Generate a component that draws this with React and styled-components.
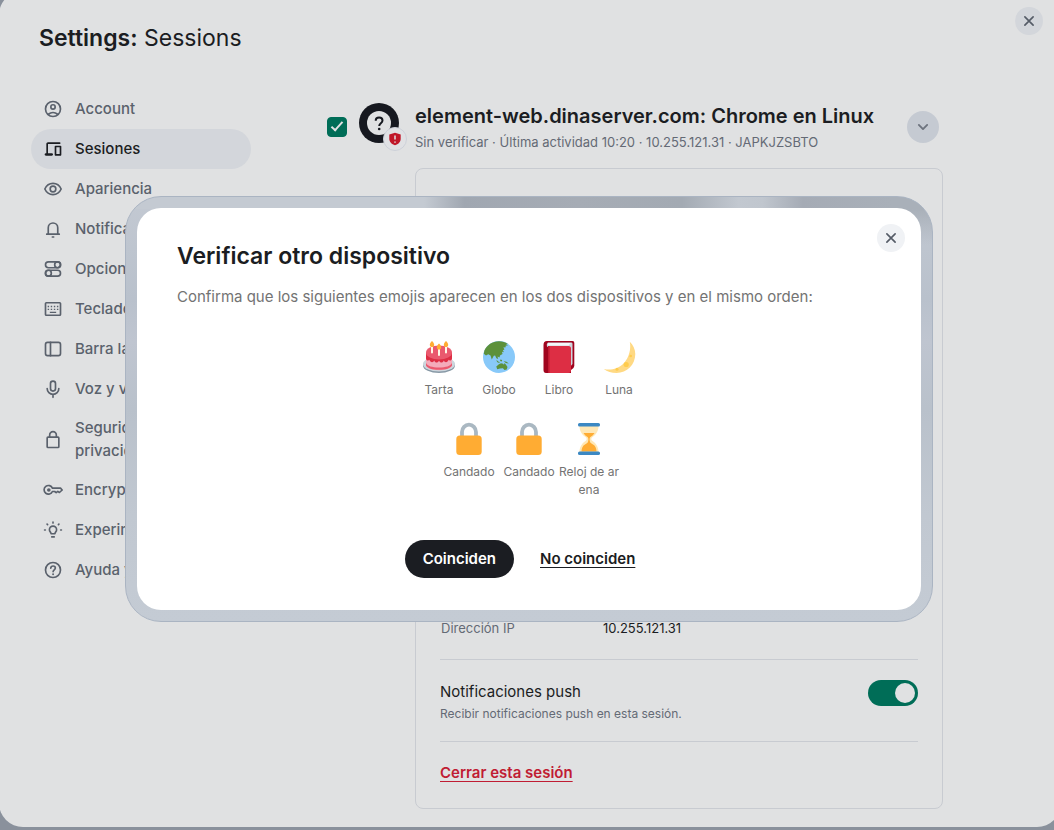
import React, { useState } from "react";
import styled, { createGlobalStyle, css } from "styled-components";

const GlobalStyle = createGlobalStyle`
  *, *::before, *::after {
    box-sizing: border-box;
  }

  body {
    margin: 0;
    background: #8a919c;
    color: #1b1d22;
    font-family: Inter, "Liberation Sans", sans-serif;
    overflow-x: hidden;
  }

  h1, h2, h3, p, ul {
    margin: 0;
    padding: 0;
  }

  button {
    font-family: inherit;
    cursor: pointer;
  }
`;

/* ---------- icons ---------- */

const Stroke = ({ children, width = 2 }) => (
  <svg
    viewBox="0 0 24 24"
    fill="none"
    stroke="currentColor"
    strokeWidth={width}
    strokeLinejoin="round"
    strokeLinecap="round"
    aria-hidden="true"
  >
    {children}
  </svg>
);

const AccountIcon = () => (
  <Stroke>
    <circle cx="12" cy="12" r="9" />
    <circle cx="12" cy="9.5" r="2.6" />
    <path d="M6.5 18.3C8 17 9.900 16.200 12 16.200s4 .8 5.500 2.100" />
  </Stroke>
);

const DevicesIcon = () => (
  <svg viewBox="0 0 24 24" fill="currentColor" aria-hidden="true">
    <path d="M3.500 20a1.450 1.450 0 0 1-1.066-.434A1.450 1.450 0 0 1 2 18.500q0-.624.434-1.062A1.450 1.450 0 0 1 3.500 17H4V6q0-.824.588-1.412A1.930 1.930 0 0 1 6 4h14q.424 0 .712.287Q21 4.576 21 5t-.288.713A.970.970 0 0 1 20 6H6v11h4.500q.624 0 1.063.438.437.437.437 1.062t-.437 1.066A1.450 1.450 0 0 1 10.500 20z" />
    <path
      fillRule="evenodd"
      d="M15 20a.970.970 0 0 1-.713-.288A.970.970 0 0 1 14 19V9q0-.424.287-.713A.970.970 0 0 1 15 8h6q.424 0 .712.287Q22 8.576 22 9v10q0 .424-.288.712A.970.970 0 0 1 21 20zm1-2h4v-8h-4z"
    />
  </svg>
);

const EyeIcon = () => (
  <Stroke>
    <path d="M2.200 12C4 8 7.600 5.300 12 5.300S20 8 21.800 12C20 16 16.400 18.700 12 18.700S4 16 2.200 12z" />
    <circle cx="12" cy="12" r="3.400" />
  </Stroke>
);

const BellIcon = () => (
  <Stroke>
    <path d="M6.300 18v-7.500a5.700 5.700 0 0 1 11.400 0V18M4.500 18.200h15" />
    <path d="M11.200 21.600h1.600" />
  </Stroke>
);

const PreferencesIcon = () => (
  <Stroke>
    <rect x="3" y="3.500" width="18" height="7" rx="3.500" />
    <circle cx="17.500" cy="7" r="3.500" />
    <rect x="3" y="13.500" width="18" height="7" rx="3.500" />
    <circle cx="6.500" cy="17" r="3.500" />
  </Stroke>
);

const KeyboardIcon = () => (
  <Stroke>
    <rect x="3" y="4.500" width="18" height="15" rx="1" />
    <path
      d="M6.400 9h.1M10.100 9h.1M13.800 9h.1M17.500 9h.1M6.400 12.500h.1M10.100 12.500h.1M13.800 12.500h.1M17.500 12.500h.1M9 16h6"
      strokeLinecap="square"
      strokeWidth="1.600"
    />
  </Stroke>
);

const SidebarIcon = () => (
  <Stroke>
    <rect x="3" y="4" width="18" height="16" rx="2.500" />
    <path d="M9 4v16" />
  </Stroke>
);

const MicIcon = () => (
  <Stroke>
    <rect x="9" y="2.500" width="6" height="12" rx="3" />
    <path d="M5 11.500a7 7 0 0 0 14 0M12 18.500V22" />
  </Stroke>
);

const LockIcon = () => (
  <Stroke>
    <rect x="5" y="8.500" width="14" height="12.500" rx="1" />
    <path d="M8 8.500V6a4 4 0 0 1 8 0v2.500" />
  </Stroke>
);

const KeyIcon = () => (
  <Stroke>
    <path d="M11.300 9.800H21l2 2.200-3.300 3-1.900-1.300-2 1.500-1.800-1.400h-2.700a5.200 5.200 0 1 1 0-4z" />
    <circle cx="7" cy="12" r="1.200" fill="currentColor" />
  </Stroke>
);

const LabsIcon = () => (
  <Stroke>
    <path d="M9.700 16.500c0-1.700-2-2.500-2-4.900a4.300 4.300 0 0 1 8.600 0c0 2.400-2 3.200-2 4.900zM10.500 20.300h3" />
    <path d="M12 2.600v.9M4.900 4.900l.6.600M19.100 4.900l-.6.600M1.900 12h.9M21.200 12h.9" />
  </Stroke>
);

const HelpIcon = () => (
  <Stroke>
    <circle cx="12" cy="12" r="9" />
    <path d="M9.300 9.700c.2-1.600 1.300-2.500 2.800-2.500 1.600 0 2.700 1 2.700 2.400 0 2.100-2.700 2.300-2.700 4.500" />
    <path d="M12.100 17.100v.1" strokeWidth="2.300" />
  </Stroke>
);

const CloseIcon = () => (
  <Stroke width="2.200">
    <path d="M6.500 6.500l11 11M17.500 6.500l-11 11" />
  </Stroke>
);

const ChevronIcon = () => (
  <Stroke width="2.200">
    <path d="M7 9.500l5 5 5-5" />
  </Stroke>
);

/* ---------- emoji drawings ---------- */

const Art = ({ children }) => (
  <svg viewBox="0 0 32 32" aria-hidden="true">
    {children}
  </svg>
);

const CakeArt = () => (
  <Art>
    <ellipse cx="16" cy="24.500" rx="16" ry="7.500" fill="#8899a6" />
    <ellipse cx="16" cy="23" rx="16" ry="7.500" fill="#ccd6dd" />
    <path d="M3 13v11c0 3 5.500 5.200 13 5.200S29 27 29 24V13z" fill="#f4abba" />
    <path d="M3 22c1.500 3 6 4.500 13 4.500s11.500-1.500 13-4.500v2.500c-1.500 2.800-6 4.300-13 4.300S4.500 27.300 3 24.500z" fill="#ea596e" />
    <path
      d="M3 12v5.500c.3 2.300 2.500 2.500 3.400 1.300.8 2.800 3.900 3.200 4.800.7.900 2.500 3.500 2.900 4.800.3 1.300 2.600 3.900 2.200 4.800-.3.900 2.500 4 2.100 4.800-.7.900 1.200 3.100 1 3.400-1.300V12z"
      fill="#dd2e44"
    />
    <ellipse cx="16" cy="11.500" rx="13" ry="7" fill="#ea596e" />
    <path d="M9 5v6.500M16 8v6M23 5v6.500" stroke="#fff8e8" strokeWidth="2" strokeLinecap="round" />
    <path
      d="M9 0c1.500 1.500 2.200 2.700 2.200 3.900S10.200 6 9 6 6.800 5.100 6.800 3.900 7.500 1.500 9 0zM16 2.600c1.500 1.500 2.200 2.700 2.200 3.900S17.200 8.600 16 8.600s-2.200-.9-2.200-2.100S14.500 4.100 16 2.600zM23 0c1.500 1.500 2.200 2.700 2.200 3.900S24.200 6 23 6s-2.200-.9-2.200-2.100S21.500 1.500 23 0z"
      fill="#ffac33"
    />
  </Art>
);

const GlobeArt = () => (
  <Art>
    <circle cx="16" cy="16" r="16" fill="#88c9f9" />
    <path
      d="M1.400 9.500C4 3.800 9.300.3 16 .2c3.500.1 6.500 1 8.800 2.500l-2 .3 2.300 1.200-2.600.6.300 1.500-2.500.2 1.200 1.800-1.700 1.200 1.300 1.700-2.100-.5.500 2.300-2.500 1.600-.5 1.900-2-.9.700 2.500-1.800-.8-1.300-2.700-1.300.2-2 3.600-1.300-3.800-2.200-1.400-2.300 1.200-2.200-1.700z"
      fill="#5c913b"
    />
    <path
      d="M13.500 18.700l1.600 1.800 1.600.5-.5.900-2.200-.9zM17.300 18.500l1.900.4-.5 1.700-1.600-.5zM20.500 20l3 .7 2.300 1.800-3-.4zM13.300 25.500l2.600-2.200 2.100-1 2.100.4.900 1 .5-1.700 1.500 1.700 1.500 2.300-.8 2.500-2.200.6-1.600-1.800-2.900.3-2.800.7z"
      fill="#5c913b"
    />
  </Art>
);

const BookArt = () => (
  <Art>
    <path d="M4 0h25.500Q31.500 0 31.300 2v23q0 2-3.300 4V32H3Q.500 32 .500 29V4q0-4 3.500-4z" fill="#a0041e" />
    <path d="M5 1.500h23.500q1 .2 1 1.200V23l-2.500 3V6H4.500q-1.700-2.500.5-4.500z" fill="#ccd6dd" />
    <path d="M5.500 2h23q-2 .4-2.500 2.500H5Q4 3 5.500 2z" fill="#f5f8fa" />
    <path d="M5 5h20.500Q28 5 28 7.500V29q0 3-2.500 3H5z" fill="#dd2e44" />
    <path d="M5.800 5v27" stroke="#be1931" strokeWidth="1.400" />
  </Art>
);

const MoonArt = () => (
  <Art>
    <path
      d="M26.800.8C30 4 32.300 8.200 32.300 13c0 10.600-8.300 19-18.800 19C8.500 32 4.200 30.800.8 28c6.700 1.400 14 .2 19.800-5.600S28.200 7.300 26.800.800z"
      fill="#ffd983"
    />
    <circle cx="23.200" cy="23.500" r="2.600" fill="#ffcc4d" />
    <circle cx="14" cy="28.300" r="1.500" fill="#ffcc4d" />
    <circle cx="27.700" cy="15" r="1.300" fill="#ffcc4d" />
  </Art>
);

const PadlockArt = () => (
  <Art>
    <path d="M9 15V9a7 7.300 0 0 1 14 0v6" fill="none" stroke="#aab8c2" strokeWidth="3.800" />
    <rect x="3.300" y="12.500" width="25.400" height="19.500" rx="3.500" fill="#ffac33" />
  </Art>
);

const HourglassArt = () => (
  <Art>
    <path
      d="M6.500 2.500h19c.2 5.500-2.600 9.300-6.300 11.700-1.200.8-1.200 2.800 0 3.600 3.700 2.400 6.500 6.200 6.300 11.700h-19c-.2-5.500 2.600-9.300 6.300-11.700 1.200-.8 1.200-2.800 0-3.600C9.100 11.800 6.300 8 6.500 2.500z"
      fill="#ffe8b6"
    />
    <path
      d="M10.500 10h11c-1 2-2.700 3-4 4-.8.700-1 1.500-.9 3 .2 2.500 1 3.200 3.400 4.400 2.200 1.200 3.500 3.600 3.500 7.100h-15c0-3.500 1.300-5.900 3.500-7.100 2.400-1.200 3.200-1.900 3.400-4.400.1-1.500-.1-2.300-.9-3-1.300-1-3-2-4-4z"
      fill="#ffac33"
    />
    <rect x="5" y="0" width="22" height="3.500" rx="1.600" fill="#3b88c3" />
    <rect x="5" y="28.500" width="22" height="3.500" rx="1.600" fill="#3b88c3" />
  </Art>
);

/* ---------- data ---------- */

const TABS = [
  { id: "account", label: "Account", Icon: AccountIcon },
  { id: "sessions", label: "Sesiones", Icon: DevicesIcon },
  { id: "appearance", label: "Apariencia", Icon: EyeIcon },
  { id: "notifications", label: "Notificaciones", Icon: BellIcon },
  { id: "preferences", label: "Opciones", Icon: PreferencesIcon },
  { id: "keyboard", label: "Teclado", Icon: KeyboardIcon },
  { id: "sidebar", label: "Barra lateral", Icon: SidebarIcon },
  { id: "voice", label: "Voz y vídeo", Icon: MicIcon },
  { id: "security", label: <>Seguridad y<br />privacidad</>, Icon: LockIcon },
  { id: "encryption", label: "Encryption", Icon: KeyIcon },
  { id: "labs", label: "Experimentos", Icon: LabsIcon },
  { id: "help", label: "Ayuda y acerca de", Icon: HelpIcon },
];

const EMOJI_ROWS = [
  [
    { label: "Tarta", Picture: CakeArt },
    { label: "Globo", Picture: GlobeArt },
    { label: "Libro", Picture: BookArt },
    { label: "Luna", Picture: MoonArt },
  ],
  [
    { label: "Candado", Picture: PadlockArt },
    { label: "Candado", Picture: PadlockArt },
    { label: "Reloj de arena", Picture: HourglassArt },
  ],
];

/* ---------- components ---------- */

function Session() {
  const [selected, setSelected] = useState(true);
  const [push, setPush] = useState(true);

  return (
    <Content>
      <SessionHeader>
        <Checkbox
          type="checkbox"
          aria-label="Seleccionar sesión"
          checked={selected}
          onChange={() => setSelected(!selected)}
        />
        <Avatar>
          <svg width="40" height="40" viewBox="0 0 40 40" aria-hidden="true">
            <circle cx="20" cy="20" r="20" fill="#16181f" />
            <circle cx="20" cy="20" r="12" fill="#e0e1e2" />
            <path
              d="M16.700 17.800c0-1.900 1.400-3.200 3.400-3.200s3.400 1.200 3.400 3c0 2.600-3.300 2.700-3.300 5.400"
              fill="none"
              stroke="#16181f"
              strokeWidth="2"
            />
            <circle cx="20.200" cy="26" r="1.300" fill="#16181f" />
          </svg>
          <Badge>
            <svg width="14" height="14" viewBox="0 0 14 14" aria-hidden="true">
              <path d="M7 .7l5.700 1.900v4.200c0 3.200-2.400 5.600-5.700 6.500-3.300-.9-5.700-3.300-5.700-6.500V2.600z" fill="#c01729" />
              <path d="M7 3.600v3.800M7 9.400v1.400" stroke="#e0e1e2" strokeWidth="1.500" />
            </svg>
          </Badge>
        </Avatar>
        <SessionTitles>
          <SessionName>element-web.dinaserver.com: Chrome en Linux</SessionName>
          <SessionMeta>Sin verificar · Última actividad 10:20 · 10.255.121.31 · JAPKJZSBTO</SessionMeta>
        </SessionTitles>
        <ExpandButton type="button" aria-label="Ocultar detalles" $icon={20}>
          <ChevronIcon />
        </ExpandButton>
      </SessionHeader>

      <Card>
        <Details>
          <DetailsTable>
            <tbody>
              <tr>
                <th scope="row">Dirección IP</th>
                <td>10.255.121.31</td>
              </tr>
            </tbody>
          </DetailsTable>
        </Details>
        <PushSection>
          <label htmlFor="push">
            <PushTitle>Notificaciones push</PushTitle>
            <PushHint>Recibir notificaciones push en esta sesión.</PushHint>
          </label>
          <Toggle id="push" type="checkbox" role="switch" checked={push} onChange={() => setPush(!push)} />
        </PushSection>
        <SignOutSection>
          <LinkButton type="button" $danger>
            Cerrar esta sesión
          </LinkButton>
        </SignOutSection>
      </Card>
    </Content>
  );
}

function VerifyDialog() {
  return (
    <Overlay>
      <Glass>
        <Dialog role="dialog" aria-modal="true" aria-labelledby="verify-title">
          <DialogClose type="button" aria-label="Cerrar" $icon={18}>
            <CloseIcon />
          </DialogClose>
          <DialogTitle id="verify-title">Verificar otro dispositivo</DialogTitle>
          <DialogText>
            Confirma que los siguientes emojis aparecen en los dos dispositivos y en el mismo orden:
          </DialogText>
          <EmojiGrid>
            {EMOJI_ROWS.map((row, i) => (
              <EmojiRow key={i}>
                {row.map(({ label, Picture }, j) => (
                  <Emoji key={j}>
                    <Picture />
                    <EmojiLabel>{label}</EmojiLabel>
                  </Emoji>
                ))}
              </EmojiRow>
            ))}
          </EmojiGrid>
          <Actions>
            <PrimaryButton type="button">Coinciden</PrimaryButton>
            <LinkButton type="button" $padded>
              No coinciden
            </LinkButton>
          </Actions>
        </Dialog>
      </Glass>
    </Overlay>
  );
}

function App() {
  const [tab, setTab] = useState("sessions");

  return (
    <>
      <GlobalStyle />
      <Scene>
        <Panel>
          <PanelClose type="button" aria-label="Cerrar ajustes" $icon={18}>
            <CloseIcon />
          </PanelClose>
          <PanelTitle>
            <strong>Settings:</strong> Sessions
          </PanelTitle>
          <Columns>
            <Nav>
              {TABS.map(({ id, label, Icon }) => (
                <NavItem key={id} type="button" $active={tab === id} onClick={() => setTab(id)}>
                  <Icon />
                  <span>{label}</span>
                </NavItem>
              ))}
            </Nav>
            <Session />
          </Columns>
        </Panel>
      </Scene>
      <VerifyDialog />
    </>
  );
}

/* ---------- styles ---------- */

const Scene = styled.div`
  overflow: hidden;
  min-height: 100vh;
`;

const Panel = styled.main`
  position: relative;
  margin: -9px -7px 3px -1px;
  padding: 32px 32px 18px;
  border-radius: 24px;
  background: #e0e1e2;
`;

const PanelTitle = styled.h1`
  padding-left: 8px;
  font-size: 23px;
  line-height: 30px;
  font-weight: 400;

  strong {
    font-weight: 600;
  }
`;

const Columns = styled.div`
  display: grid;
  grid-template-columns: 220px minmax(0, 616px);
  column-gap: 76px;
  margin-top: 36px;
`;

const Nav = styled.nav`
  display: flex;
  flex-direction: column;
`;

const NavItem = styled.button`
  display: flex;
  align-items: center;
  gap: 12px;
  min-height: 40px;
  padding: 8px 12px;
  border: none;
  border-radius: 24px;
  background: ${(p) => (p.$active ? "#d3d6db" : "transparent")};
  color: ${(p) => (p.$active ? "#1b1d22" : "#5a616c")};
  font-size: 15px;
  line-height: 1.5;
  font-weight: 500;
  text-align: left;

  svg {
    flex: none;
    width: 20px;
    height: 20px;
  }
`;

const RoundButton = styled.button`
  display: grid;
  place-items: center;
  width: 28px;
  height: 28px;
  padding: 0;
  border: none;
  border-radius: 50%;
  background: #d3d6db;
  color: #555c67;

  svg {
    width: ${(p) => p.$icon}px;
    height: ${(p) => p.$icon}px;
  }
`;

const PanelClose = styled(RoundButton)`
  position: absolute;
  top: 16px;
  right: 18px;
`;

const Content = styled.section`
  padding-top: 14px;
`;

const SessionHeader = styled.div`
  display: flex;
  align-items: flex-start;
  gap: 12px;
  padding-right: 4px;
`;

const Checkbox = styled.input`
  appearance: none;
  flex: none;
  width: 20px;
  height: 20px;
  margin: 14px 0 0;
  border: 1px solid #006d57;
  border-radius: 4px;
  cursor: pointer;

  &:checked {
    background: #006d57;
  }

  &:checked::after {
    content: "";
    display: block;
    width: 6px;
    height: 12px;
    margin: 1px 0 0 6px;
    border: solid #e0e1e2;
    border-width: 0 2px 2px 0;
    transform: rotate(42deg);
  }
`;

const Avatar = styled.div`
  position: relative;
  flex: none;
  width: 40px;
  height: 40px;
`;

const Badge = styled.span`
  position: absolute;
  right: -8px;
  bottom: -8px;
  display: grid;
  place-items: center;
  width: 24px;
  height: 24px;
  border: 1px solid #cdd1d9;
  border-radius: 50%;
  background: #e0e1e4;
`;

const SessionTitles = styled.div`
  flex: 1;
  min-width: 0;
  padding-left: 4px;
`;

const SessionName = styled.h2`
  font-size: 20px;
  line-height: 26px;
  font-weight: 600;
`;

const SessionMeta = styled.p`
  margin-top: 3px;
  color: #646a75;
  font-size: 13px;
  line-height: 20px;
`;

const ExpandButton = styled(RoundButton)`
  width: 32px;
  height: 32px;
  margin-top: 8px;
  background: #c5cad2;
  color: #6d737e;
`;

const Card = styled.div`
  margin: 16px 0 0 88px;
  padding: 0 24px;
  border: 1px solid #c8cbd1;
  border-radius: 8px;
`;

const section = css`
  border-bottom: 1px solid #c8cbd1;
`;

const Details = styled.div`
  ${section}
  display: flex;
  align-items: flex-end;
  min-height: 491px;
  padding-bottom: 20px;
`;

const DetailsTable = styled.table`
  width: 100%;
  border-spacing: 0;
  font-size: 13px;
  line-height: 20px;

  th,
  td {
    padding: 1px;
    text-align: left;
    font-weight: 400;
  }

  th {
    width: 162px;
    color: #646a75;
  }
`;

const PushSection = styled.div`
  ${section}
  display: flex;
  justify-content: space-between;
  align-items: flex-start;
  padding: 20px 0 17px;
`;

const PushTitle = styled.span`
  display: block;
  font-size: 15px;
  line-height: 24px;
`;

const PushHint = styled.span`
  display: block;
  color: #646a75;
  font-size: 12px;
  line-height: 20px;
`;

const Toggle = styled.input`
  appearance: none;
  flex: none;
  width: 50px;
  height: 26px;
  margin: 0;
  padding: 3px;
  border-radius: 13px;
  background: ${(p) => (p.checked ? "#006d57" : "#8a919c")};
  cursor: pointer;

  &::after {
    content: "";
    display: block;
    width: 20px;
    height: 20px;
    margin-left: ${(p) => (p.checked ? "auto" : "0")};
    border-radius: 50%;
    background: #e0e1e2;
  }
`;

const SignOutSection = styled.div`
  padding: 20px 0 24px;
`;

const LinkButton = styled.button`
  display: block;
  padding: ${(p) => (p.$padded ? "0 18px" : "0")};
  border: none;
  background: none;
  color: ${(p) => (p.$danger ? "#c01c33" : "#1b1d22")};
  font-size: 15px;
  line-height: 22px;
  font-weight: 600;
  text-decoration: underline;
  text-underline-offset: 3px;
`;

const Overlay = styled.div`
  position: fixed;
  inset: 0;
  display: flex;
  align-items: center;
  justify-content: center;
  padding: 0 0 12px 4px;
`;

const Glass = styled.div`
  width: 808px;
  max-width: calc(100% - 32px);
  padding: 11px;
  border: 1px solid #aab4c2;
  border-radius: 36px;
  background:
    linear-gradient(
      90deg,
      #c4cad2 37%,
      #a0a7b1 42%,
      #a6acb5 56%,
      #a3aab3 69%,
      #c2c8d0 76%,
      #c0c6ce 79%,
      #a5abb5 84%,
      #a9b0b9 95%
    ) top / 100% 12px no-repeat,
    linear-gradient(#a9b0b9 12px, #a9b0b900) right top / 40px 48px no-repeat,
    linear-gradient(#c3c9d2, #b9c1cc 24%, #bfc5d0 34%, #b9c1cb 50%, #c1c8d1 75%, #c4cbd4);
`;

const Dialog = styled.section`
  position: relative;
  padding: 32px 40px;
  border-radius: 24px;
  background: #fff;
`;

const DialogClose = styled(RoundButton)`
  position: absolute;
  top: 16px;
  right: 16px;
  background: #f0f2f5;
`;

const DialogTitle = styled.h2`
  font-size: 23px;
  line-height: 32px;
  font-weight: 600;
`;

const DialogText = styled.p`
  margin-top: 13px;
  color: #737373;
  font-size: 15px;
  line-height: 24px;
`;

const EmojiGrid = styled.div`
  display: flex;
  flex-direction: column;
  gap: 24px;
  margin-top: 32px;
`;

const EmojiRow = styled.div`
  display: flex;
  justify-content: center;
`;

const Emoji = styled.div`
  display: flex;
  flex-direction: column;
  align-items: center;
  gap: 8px;
  width: 60px;

  svg {
    width: 32px;
    height: 32px;
    overflow: visible;
  }
`;

const EmojiLabel = styled.span`
  color: #737373;
  font-size: 12px;
  line-height: 18px;
  text-align: center;
  word-break: break-all;
`;

const Actions = styled.div`
  display: flex;
  justify-content: center;
  align-items: center;
  gap: 8px;
  margin-top: 41px;
`;

const PrimaryButton = styled.button`
  padding: 8px 18px;
  border: none;
  border-radius: 19px;
  background: #1b1d22;
  color: #fff;
  font-size: 15px;
  line-height: 22px;
  font-weight: 600;
`;

export default App;
